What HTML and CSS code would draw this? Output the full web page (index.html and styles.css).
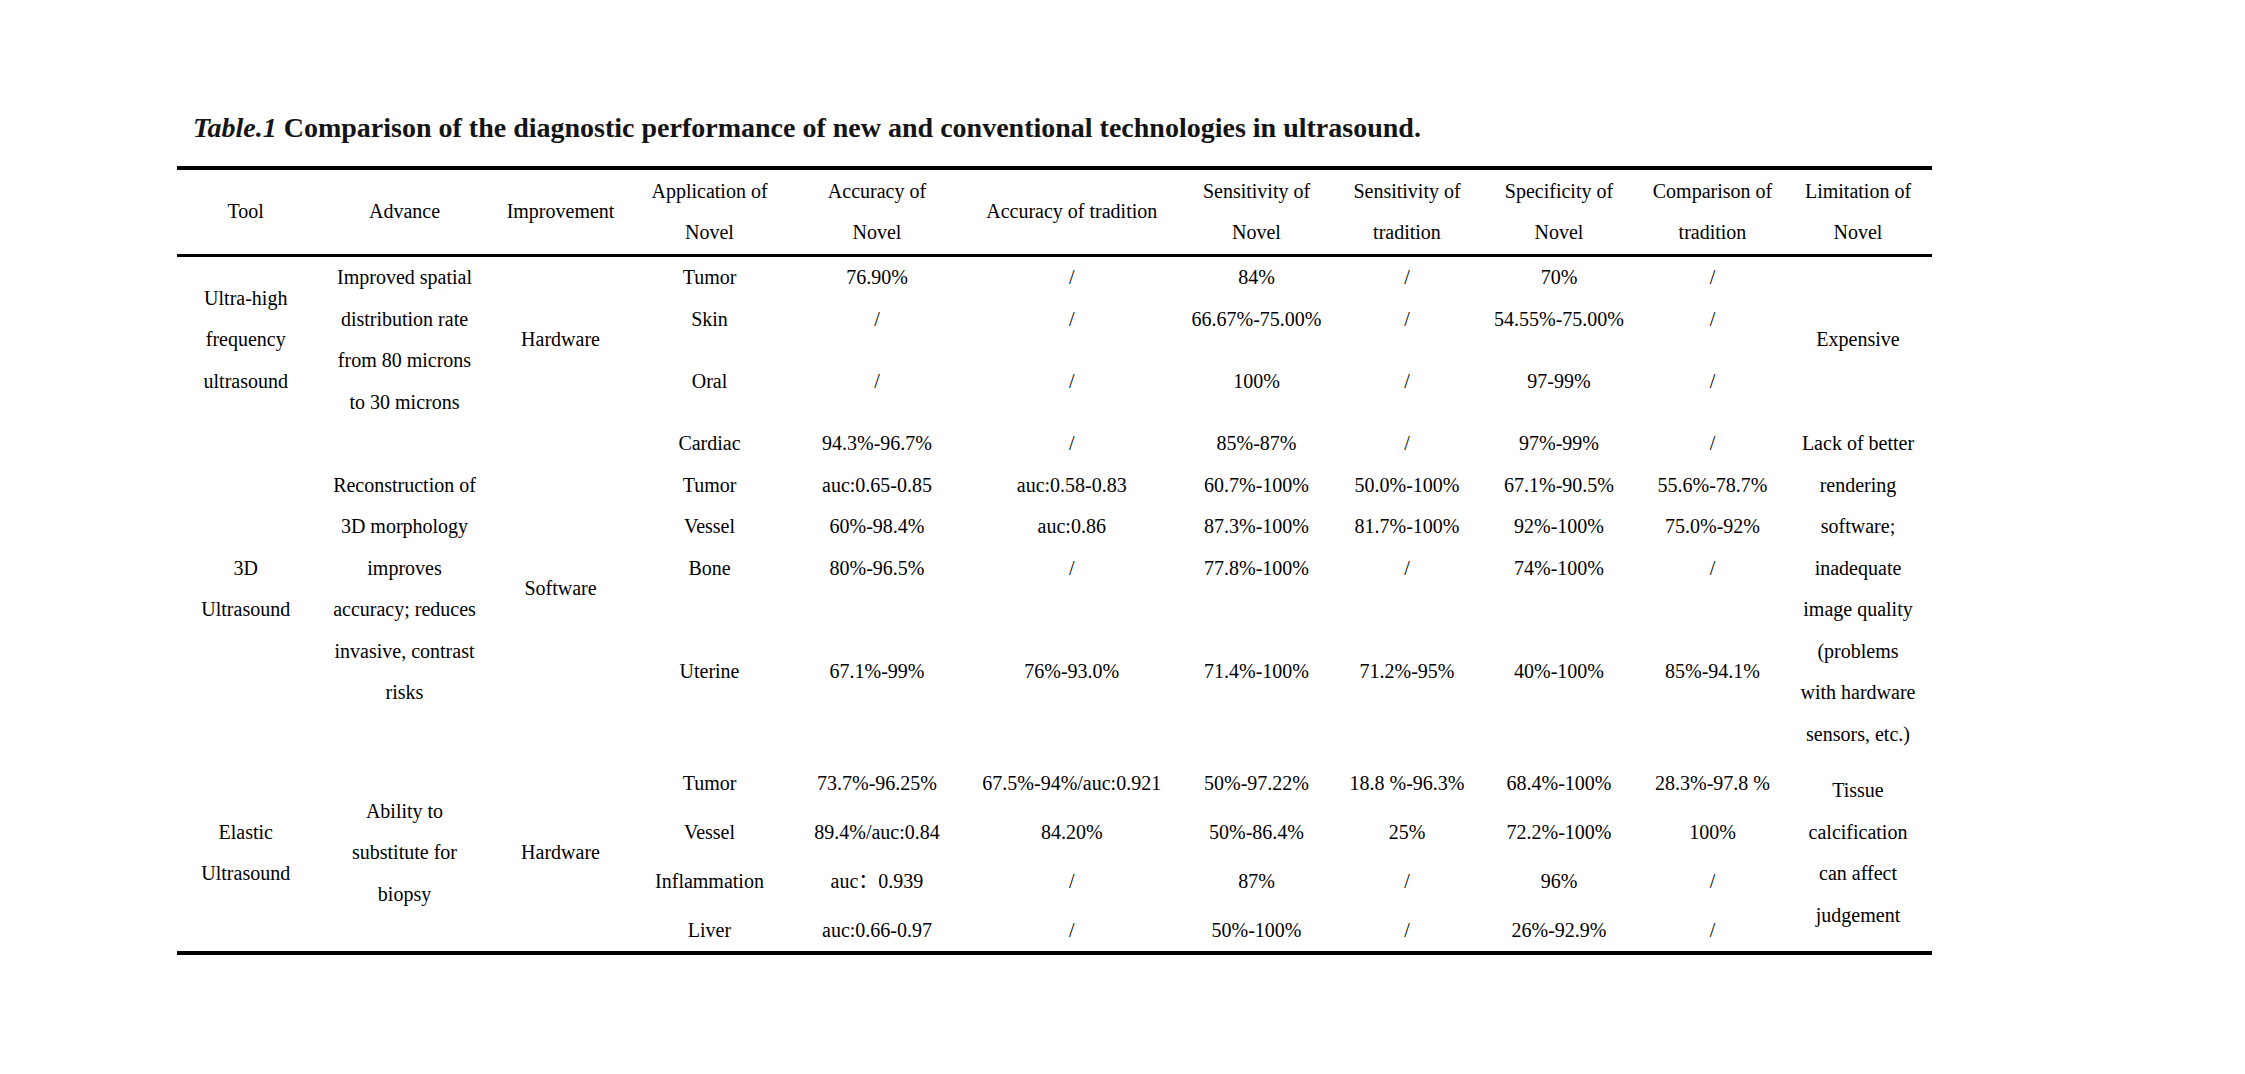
FILE: index.html
```html
<!DOCTYPE html>
<html lang="en">
<head>
<meta charset="utf-8">
<title>Table 1</title>
<link rel="stylesheet" href="styles.css">
</head>
<body>
<div class="page">
  <p class="caption"><em>Table.1</em> Comparison of the diagnostic performance of new and conventional technologies in ultrasound.</p>
  <table class="data">
    <colgroup>
      <col class="c-tool"><col class="c-adv"><col class="c-imp"><col class="c-app"><col class="c-accn"><col class="c-acct"><col class="c-sensn"><col class="c-senst"><col class="c-spec"><col class="c-comp"><col class="c-lim">
    </colgroup>
    <thead>
      <tr class="head">
        <th>Tool</th>
        <th>Advance</th>
        <th>Improvement</th>
        <th>Application of<br>Novel</th>
        <th>Accuracy of<br>Novel</th>
        <th>Accuracy of tradition</th>
        <th>Sensitivity of<br>Novel</th>
        <th>Sensitivity of<br>tradition</th>
        <th>Specificity of<br>Novel</th>
        <th>Comparison of<br>tradition</th>
        <th class="last">Limitation of<br>Novel</th>
      </tr>
    </thead>
    <tbody>
      <tr class="r1">
        <td rowspan="3">Ultra-high<br>frequency<br>ultrasound</td>
        <td rowspan="3">Improved spatial<br>distribution rate<br>from 80 microns<br>to 30 microns</td>
        <td rowspan="3">Hardware</td>
        <td>Tumor</td><td>76.90%</td><td>/</td><td>84%</td><td>/</td><td>70%</td><td>/</td>
        <td rowspan="3" class="last">Expensive</td>
      </tr>
      <tr class="r1">
        <td>Skin</td><td>/</td><td>/</td><td>66.67%-75.00%</td><td>/</td><td>54.55%-75.00%</td><td>/</td>
      </tr>
      <tr class="r2">
        <td>Oral</td><td>/</td><td>/</td><td>100%</td><td>/</td><td>97-99%</td><td>/</td>
      </tr>

      <tr class="r1">
        <td rowspan="5">3D<br>Ultrasound</td>
        <td rowspan="5">Reconstruction of<br>3D morphology<br>improves<br>accuracy; reduces<br>invasive, contrast<br>risks</td>
        <td rowspan="5">Software</td>
        <td>Cardiac</td><td>94.3%-96.7%</td><td>/</td><td>85%-87%</td><td>/</td><td>97%-99%</td><td>/</td>
        <td rowspan="5" class="last">Lack of better<br>rendering<br>software;<br>inadequate<br>image quality<br>(problems<br>with hardware<br>sensors, etc.)</td>
      </tr>
      <tr class="r1">
        <td>Tumor</td><td>auc:0.65-0.85</td><td>auc:0.58-0.83</td><td>60.7%-100%</td><td>50.0%-100%</td><td>67.1%-90.5%</td><td>55.6%-78.7%</td>
      </tr>
      <tr class="r1">
        <td>Vessel</td><td>60%-98.4%</td><td>auc:0.86</td><td>87.3%-100%</td><td>81.7%-100%</td><td>92%-100%</td><td>75.0%-92%</td>
      </tr>
      <tr class="r1">
        <td>Bone</td><td>80%-96.5%</td><td>/</td><td>77.8%-100%</td><td>/</td><td>74%-100%</td><td>/</td>
      </tr>
      <tr class="r4">
        <td>Uterine</td><td>67.1%-99%</td><td>76%-93.0%</td><td>71.4%-100%</td><td>71.2%-95%</td><td>40%-100%</td><td>85%-94.1%</td>
      </tr>

      <tr class="r3">
        <td rowspan="4">Elastic<br>Ultrasound</td>
        <td rowspan="4">Ability to<br>substitute for<br>biopsy</td>
        <td rowspan="4">Hardware</td>
        <td class="lo">Tumor</td><td class="lo">73.7%-96.25%</td><td class="lo">67.5%-94%/auc:0.921</td><td class="lo">50%-97.22%</td><td class="lo">18.8 %-96.3%</td><td class="lo">68.4%-100%</td><td class="lo">28.3%-97.8 %</td>
        <td rowspan="4" class="last">Tissue<br>calcification<br>can affect<br>judgement</td>
      </tr>
      <tr class="r3">
        <td class="lo">Vessel</td><td class="lo">89.4%/auc:0.84</td><td class="lo">84.20%</td><td class="lo">50%-86.4%</td><td class="lo">25%</td><td class="lo">72.2%-100%</td><td class="lo">100%</td>
      </tr>
      <tr class="r3">
        <td class="lo">Inflammation</td><td class="lo">auc：0.939</td><td class="lo">/</td><td class="lo">87%</td><td class="lo">/</td><td class="lo">96%</td><td class="lo">/</td>
      </tr>
      <tr class="r3">
        <td class="lo">Liver</td><td class="lo">auc:0.66-0.97</td><td class="lo">/</td><td class="lo">50%-100%</td><td class="lo">/</td><td class="lo">26%-92.9%</td><td class="lo">/</td>
      </tr>
    </tbody>
  </table>
</div>
</body>
</html>
```

FILE: styles.css
```css
html, body {
  margin: 0;
  padding: 0;
  background: #ffffff;
}

body {
  font-family: "Liberation Serif", "Noto Sans CJK SC", serif;
  color: #000000;
}

.page {
  padding: 108px 0 0 177px;
}

.caption {
  margin: 0 0 18px 16px;
  font-size: 28px;
  line-height: 40px;
  font-weight: bold;
  color: #141414;
}

.caption em {
  font-style: italic;
}

.data {
  border-collapse: separate;
  border-spacing: 0;
  table-layout: fixed;
  width: 1755px;
  border-top: 4px solid #000;
  border-bottom: 4px solid #000;
  font-size: 20px;
  line-height: 41.5px;
}

.c-tool { width: 137.5px; }
.c-adv { width: 180px; }
.c-imp { width: 132px; }
.c-app { width: 166px; }
.c-accn { width: 169px; }
.c-acct { width: 220.5px; }
.c-sensn { width: 149px; }
.c-senst { width: 152px; }
.c-spec { width: 152px; }
.c-comp { width: 155px; }
.c-lim { width: 142px; }

.data th,
.data td {
  padding: 0;
  text-align: center;
  vertical-align: middle;
  font-weight: normal;
  white-space: nowrap;
}

.data th {
  line-height: 41.5px;
  border-bottom: 3px solid #000;
}

.data .last {
  padding-right: 6px;
}

.head { height: 87px; }
.r1 { height: 41.5px; }
.r2 { height: 83px; }
.r4 { height: 166px; }
.r3 { height: 49px; }

.data td.lo {
  line-height: 30px;
  padding-top: 6px;
}
```
